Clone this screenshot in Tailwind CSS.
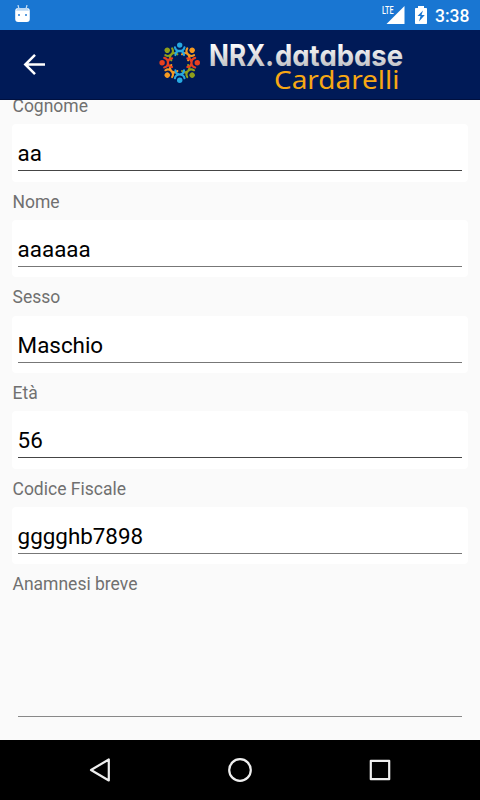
<!DOCTYPE html>
<html lang="it">
<head>
<meta charset="utf-8">
<meta name="viewport" content="width=device-width">
<title>NRX.database</title>
<script src="https://cdn.jsdelivr.net/npm/@tailwindcss/browser@4"></script>
</head>
<body class="flex h-[800px] w-[480px] flex-col overflow-hidden bg-[#fafafa] font-['Roboto',sans-serif]">
<div class="flex h-[30px] shrink-0 items-center bg-[#1976d2] pl-[14px] pr-[9px]">
  <svg class="h-[20px] w-[18px]" viewBox="0 0 18 20"><path d="M4 0l1 4M13 0l-1 4" stroke="#fff" stroke-opacity=".75" stroke-width="1.2"/><rect x="1.2" y="3" width="14.6" height="14" rx="3" fill="#fff"/><path d="M3.6 3h9.8L15 5.700H2z" fill="#bcd8f3"/><path d="M4 9h2v2H4zM11 9h2v2h-2z" fill="#5b9de0"/></svg>
  <svg class="ml-auto h-[20px] w-[24px]" viewBox="0 0 24 20"><path d="M23.5 1v18H5.5z" fill="#fff"/><path d="M0 0h13v10H0z" fill="#1976d2"/><text x="1" y="9" textLength="11.5" lengthAdjust="spacingAndGlyphs" font-size="10.500" font-weight="500" fill="#fff" font-family="Roboto">LTE</text></svg>
  <svg class="ml-[9px] h-[20px] w-[14px]" viewBox="0 0 14 20"><path d="M4 1h6v2h2.2q.8 0 .8.8v14.4q0 .8-.8.8H1.800q-.8 0-.8-.8V3.800Q1 3 1.800 3H4z" fill="#fff"/><path d="M9 5.500L3.500 11h3L5 16.500 10.800 10H7.500z" fill="#1976d2"/></svg>
  <span class="ml-[7px] mt-[2px] w-[36px] text-[17.500px] font-medium leading-5 text-white">3:38</span>
</div>
<header class="flex h-[70px] shrink-0 border-b border-[#00103f] bg-[#001a57]">
  <svg class="ml-[23px] mt-[23px] h-6 w-6" viewBox="0 0 24 24" fill="none" stroke="#fff" stroke-width="2.500"><path d="M22 11.500H3M12 1.800L2.300 11.500l9.700 9.700"/></svg>
  <svg class="ml-[108px] h-[69px] w-[255px]" viewBox="155 30 255 69">
    <defs>
      <linearGradient id="silver" x1="0" y1="43" x2="0" y2="67" gradientUnits="userSpaceOnUse"><stop offset="0" stop-color="#fff"/><stop offset=".5" stop-color="#e0e0e2"/><stop offset="1" stop-color="#c0c2c6"/></linearGradient>
      <g id="person"><circle cy="-17.600" r="2.700" stroke="none"/><path d="M-4.800-15.500Q-4-11.800 0-11.800T4.800-15.500M-4.300-7.600Q-4.300-11.300 0-11.800 4.300-11.300 4.300-7.600" fill="none" stroke-width="2.100" stroke-linecap="round"/></g>
    </defs>
    <g transform="translate(179.700 62.700)">
      <use href="#person" transform="rotate(45)" fill="#f59a21" stroke="#f59a21"/>
      <use href="#person" transform="rotate(135)" fill="#8f9f1b" stroke="#8f9f1b"/>
      <use href="#person" transform="rotate(225)" fill="#f59a21" stroke="#f59a21"/>
      <use href="#person" transform="rotate(315)" fill="#8f9f1b" stroke="#8f9f1b"/>
      <use href="#person" fill="#27a9e1" stroke="#27a9e1"/>
      <use href="#person" transform="rotate(90)" fill="#e8401f" stroke="#e8401f"/>
      <use href="#person" transform="rotate(180)" fill="#27a9e1" stroke="#27a9e1"/>
      <use href="#person" transform="rotate(270)" fill="#e8401f" stroke="#e8401f"/>
    </g>
    <text x="209" y="65.500" textLength="65" lengthAdjust="spacingAndGlyphs" class="font-['Inter',sans-serif] text-[30.500px] font-bold" fill="url(#silver)">NRX.</text>
    <text x="275" y="65.500" textLength="128" lengthAdjust="spacingAndGlyphs" style="font-feature-settings:'cv11' 1" class="font-['Inter',sans-serif] text-[29.500px] font-bold" fill="url(#silver)">database</text>
    <text x="274" y="89" textLength="125.500" lengthAdjust="spacingAndGlyphs" class="font-['Noto_Sans',sans-serif] text-[25.500px] font-normal" fill="#f7a814">Cardarelli</text>
  </svg>
</header>
<main class="min-h-0 flex-1 overflow-hidden px-3 text-[17.500px] text-[#707070]">
  <div class="-mt-[14px]">
    <label class="block h-[38.300px] pt-[8.200px] pl-[.5px] leading-6">Cognome</label>
    <div class="h-[57.350px] rounded bg-white px-[5.600px] pt-[13px]"><div class="h-[34px] border-b border-[#454545] text-[22.400px] leading-[33px] text-black">aa</div></div>
    <label class="block h-[38.300px] pt-[8.200px] pl-[.5px] leading-6">Nome</label>
    <div class="h-[57.350px] rounded bg-white px-[5.600px] pt-[13px]"><div class="h-[34px] border-b border-[#777] text-[22.400px] leading-[33px] text-black">aaaaaa</div></div>
    <label class="block h-[38.300px] pt-[8.200px] pl-[.5px] leading-6">Sesso</label>
    <div class="h-[57.350px] rounded bg-white px-[5.600px] pt-[13px]"><div class="h-[34px] border-b border-[#777] text-[22.400px] leading-[33px] text-black">Maschio</div></div>
    <label class="block h-[38.300px] pt-[8.200px] pl-[.5px] leading-6">Età</label>
    <div class="h-[57.350px] rounded bg-white px-[5.600px] pt-[13px]"><div class="h-[34px] border-b border-[#454545] text-[22.400px] leading-[33px] text-black">56</div></div>
    <label class="block h-[38.300px] pt-[8.200px] pl-[.5px] leading-6">Codice Fiscale</label>
    <div class="h-[57.350px] rounded bg-white px-[5.600px] pt-[13px]"><div class="h-[34px] border-b border-[#777] text-[22.400px] leading-[33px] text-black">gggghb7898</div></div>
    <label class="block h-[38.300px] pt-[8.200px] pl-[.5px] leading-6">Anamnesi breve</label>
    <div class="mx-[5.600px] h-[114.500px] border-b border-[#888]"></div>
  </div>
</main>
<nav class="flex h-[60px] shrink-0 items-center justify-between bg-black px-[85px]">
  <svg class="h-[30px] w-[30px]" viewBox="0 0 30 30" fill="none" stroke="#eee" stroke-width="2.200" stroke-linejoin="round"><path d="M23.800 4.500v21L6 15z"/></svg>
  <svg class="h-[30px] w-[30px]" viewBox="0 0 30 30" fill="none" stroke="#eee" stroke-width="2.200"><circle cx="15" cy="15" r="10.800"/></svg>
  <svg class="h-[30px] w-[30px]" viewBox="0 0 30 30" fill="none" stroke="#eee" stroke-width="2.200" stroke-linejoin="round"><path d="M5.800 5.800h18.400v18.400H5.800z"/></svg>
</nav>
</body>
</html>
